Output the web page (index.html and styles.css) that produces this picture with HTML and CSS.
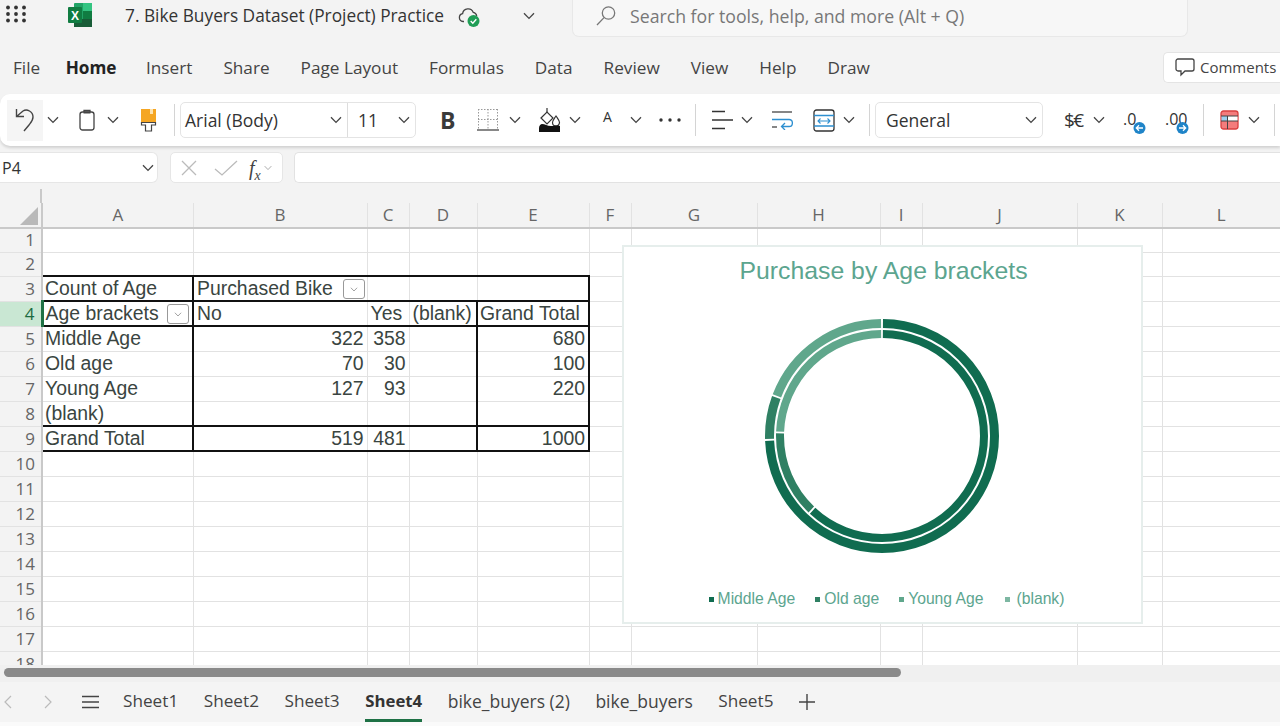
FILE: index.html
```html
<!DOCTYPE html>
<html>
<head>
<meta charset="utf-8">
<title>7. Bike Buyers Dataset (Project) Practice</title>
<link rel="stylesheet" href="styles.css">
</head>
<body>

<svg class="defs" width="0" height="0">
  <symbol id="chev" viewBox="0 0 12 8"><path d="M1 1.2 6 6.4 11 1.2" fill="none" stroke="#444" stroke-width="1.3"/></symbol>
</svg>

<div class="titlebar">
  <svg class="waffle" width="22" height="18" viewBox="0 0 22 18" fill="#333">
    <circle cx="3" cy="2.5" r="1.9"/><circle cx="11" cy="2.5" r="1.9"/><circle cx="19" cy="2.5" r="1.9"/>
    <circle cx="3" cy="9" r="1.9"/><circle cx="11" cy="9" r="1.9"/><circle cx="19" cy="9" r="1.9"/>
    <circle cx="3" cy="15.5" r="1.9"/><circle cx="11" cy="15.5" r="1.9"/><circle cx="19" cy="15.5" r="1.9"/>
  </svg>
  <svg class="xl" width="26" height="26" viewBox="0 0 26 26">
    <rect x="7" y="1" width="18" height="24" rx="1" fill="#21a366"/>
    <rect x="16" y="1" width="9" height="8" fill="#33c481"/>
    <rect x="16" y="9" width="9" height="8" fill="#107c41"/>
    <rect x="7" y="17" width="18" height="8" fill="#185c37"/>
    <rect x="1" y="5" width="14" height="16" rx="1" fill="#107c41"/>
    <text x="8" y="17.5" text-anchor="middle" class="xl-x">X</text>
  </svg>
  <span class="doc-name">7. Bike Buyers Dataset (Project) Practice</span>
  <svg class="cloud" width="23" height="22" viewBox="0 0 23 22">
    <path d="M6 15.5H5a4 4 0 0 1-.4-7.9A5.6 5.6 0 0 1 15.3 6.4a4.4 4.4 0 0 1 3.4 3.6" fill="none" stroke="#444" stroke-width="1.3"/>
    <circle cx="15.5" cy="15" r="6" fill="#1f9d55"/>
    <path d="M12.7 15.1 14.8 17.2 18.3 13.2" fill="none" stroke="#fff" stroke-width="1.4"/>
  </svg>
  <svg class="title-chev" width="12" height="8"><use href="#chev"/></svg>
  <div class="searchbox">
    <svg width="22" height="22" viewBox="0 0 22 22" fill="none" stroke="#777" stroke-width="1.3">
      <circle cx="13.5" cy="8" r="6.2"/><path d="M9 12.6 2 20"/>
    </svg>
    <span>Search for tools, help, and more (Alt + Q)</span>
  </div>
</div>

<div class="menubar">
  <span class="menu-file">File</span>
  <span class="menu-on">Home</span>
  <span>Insert</span>
  <span>Share</span>
  <span>Page Layout</span>
  <span>Formulas</span>
  <span>Data</span>
  <span>Review</span>
  <span>View</span>
  <span>Help</span>
  <span>Draw</span>
  <div class="comments">
    <svg width="22" height="20" viewBox="0 0 22 20" fill="none" stroke="#444" stroke-width="1.3">
      <path d="M4 2h14a2 2 0 0 1 2 2v8a2 2 0 0 1-2 2h-7l-4 4v-4H4a2 2 0 0 1-2-2V4a2 2 0 0 1 2-2z"/>
    </svg>
    Comments
  </div>
</div>

<div class="ribbon">
  <div class="undo">
    <svg width="22" height="28" viewBox="0 0 22 28" fill="none" stroke="#444" stroke-width="1.4">
      <path d="M2.5 3v7.5H10M2.5 10.5 9 5c4-2.500 10 .5 10 6 0 3.500-2 5.500-4 8l-5 6"/>
    </svg>
  </div>
  <svg class="ml4" width="12" height="8"><use href="#chev"/></svg>
  <svg class="ml20" width="16" height="22" viewBox="0 0 16 22" fill="none" stroke="#444" stroke-width="1.3">
    <rect x="1" y="3" width="14" height="18" rx="2.500"/><path d="M5 3V1.500h6V3" /><path d="M4.500 3.500h7" stroke-width="2"/>
  </svg>
  <svg class="ml12" width="12" height="8"><use href="#chev"/></svg>
  <svg class="ml21" width="17" height="24" viewBox="0 0 17 24">
    <rect x="1" y="1" width="15" height="13" fill="#f5a623"/>
    <rect x="10" y="1" width="3" height="5" fill="#fde3b0"/>
    <path d="M1.500 14.500h14v2.500h-4v6h-6v-6h-4z" fill="#fff" stroke="#444" stroke-width="1.200"/>
  </svg>
  <i class="sep ml17"></i>
  <div class="fontbox ml5">
    <div class="fb-name">Arial (Body)<svg width="12" height="8"><use href="#chev"/></svg></div>
    <div class="fb-size">11<svg width="12" height="8"><use href="#chev"/></svg></div>
  </div>
  <b class="bold-b ml24">B</b>
  <svg class="ml22" width="22" height="24" viewBox="0 0 22 24" fill="none">
    <path d="M1 1.500h20M1 11.500h20M1.500 1v20M11 1v20M20.500 1v20" stroke="#999" stroke-width="1" stroke-dasharray="1.500 1.500"/>
    <path d="M0 22h22" stroke="#888" stroke-width="2"/>
  </svg>
  <svg class="ml10" width="12" height="8"><use href="#chev"/></svg>
  <svg class="ml17" width="23" height="24" viewBox="0 0 23 24">
    <path d="M3 10 9 4l6 6-6 6z" fill="#fff" stroke="#333" stroke-width="1.200"/>
    <path d="M9 4V0" stroke="#333" stroke-width="1.200"/>
    <path d="M18 8c2 3 3.500 4.500 3.500 6.500a3.500 3.500 0 0 1-7 0C14.500 12.500 16 11 18 8z" fill="#fff" stroke="#333" stroke-width="1.200"/>
    <path d="M1 24v-4c0-2.500 2-4 3-4 3 0 5 2 9 2s5-1 9 0v6z" fill="#111"/>
  </svg>
  <svg class="ml8" width="12" height="8"><use href="#chev"/></svg>
  <span class="font-a ml22">A</span>
  <svg class="ml17" width="12" height="8"><use href="#chev"/></svg>
  <svg class="ml16" width="24" height="6" viewBox="0 0 24 6" fill="#333">
    <circle cx="3" cy="3" r="1.700"/><circle cx="12" cy="3" r="1.700"/><circle cx="21" cy="3" r="1.700"/>
  </svg>
  <i class="sep ml13"></i>
  <svg class="ml15" width="22" height="20" viewBox="0 0 22 20" stroke="#333" stroke-width="1.300">
    <path d="M1 1.500h13M1 10h21M1 18.500h13"/>
  </svg>
  <svg class="ml8" width="12" height="8"><use href="#chev"/></svg>
  <svg class="ml18" width="22" height="20" viewBox="0 0 22 20" fill="none" stroke="#2d8fd0" stroke-width="1.300">
    <path d="M1 2h20" stroke="#444"/><path d="M1 9.500h17c4.500 0 4.500 7 0 7h-7M14 13l-3.500 3.500L14 20"/><path d="M1 17h5" stroke="#444"/>
  </svg>
  <svg class="ml20" width="22" height="23" viewBox="0 0 22 23" fill="none">
    <rect x="1" y="1" width="20" height="21" rx="2.500" stroke="#333" stroke-width="1.300"/>
    <path d="M1 6.500h20M1 17h20" stroke="#2d8fd0" stroke-width="1.300"/>
    <path d="M5 12h12M7.500 9.500 5 12l2.500 2.500M14.500 9.500 17 12l-2.500 2.500" stroke="#2d8fd0" stroke-width="1.100"/>
  </svg>
  <svg class="ml8" width="12" height="8"><use href="#chev"/></svg>
  <i class="sep ml14"></i>
  <div class="numbox ml5">General<svg width="12" height="8"><use href="#chev"/></svg></div>
  <span class="currency ml21">$€</span>
  <svg class="ml9" width="12" height="8"><use href="#chev"/></svg>
  <svg class="ml18" width="23" height="32" viewBox="0 -8 23 32">
    <text x="0" y="13" class="dec">.0</text>
    <circle cx="16.500" cy="16" r="6" fill="#1f84c8"/>
    <path d="M20 16h-6.500M16 13.300 13.300 16l2.700 2.700" fill="none" stroke="#fff" stroke-width="1.300"/>
  </svg>
  <svg class="ml19" width="25" height="32" viewBox="0 -8 25 32">
    <text x="0" y="13" class="dec">.00</text>
    <circle cx="17.500" cy="16" r="6" fill="#1f84c8"/>
    <path d="M14 16h6.500M18 13.300l2.700 2.700-2.700 2.700" fill="none" stroke="#fff" stroke-width="1.300"/>
  </svg>
  <i class="sep ml13"></i>
  <svg class="ml16" width="19" height="20" viewBox="0 0 19 20">
    <rect x="1" y="1" width="17" height="18" rx="2.500" fill="#f47c7c" stroke="#d94040" stroke-width="1.300"/>
    <rect x="1.500" y="6" width="6" height="5" fill="#9fd0ee"/>
    <rect x="7.500" y="6" width="10" height="5" fill="#fff"/>
    <path d="M1 6h17M1 11h17M7.500 6v13" stroke="#444" stroke-width="1"/>
  </svg>
  <svg class="ml9" width="12" height="8"><use href="#chev"/></svg>
  <i class="sep ml14"></i>
</div>

<div class="formulabar">
  <div class="namebox">P4<svg width="12" height="8"><use href="#chev"/></svg></div>
  <div class="fx-group">
    <svg width="18" height="18" viewBox="0 0 18 18" stroke="#bbb" stroke-width="1.300"><path d="M2 2l14 14M16 2 2 16"/></svg>
    <svg class="fx-check" width="24" height="18" viewBox="0 0 24 18" fill="none" stroke="#bbb" stroke-width="1.300"><path d="M1 10l7 6L23 2"/></svg>
    <span class="fx-label">f<sub>x</sub></span>
    <svg class="fx-chev" width="8" height="6"><use href="#chev"/></svg>
  </div>
  <div class="formula-input"></div>
</div>

<div class="sheet">
  <div class="sheet-top"><i></i></div>
  <table class="cells">
    <colgroup>
      <col class="c-rh"><col class="c-a"><col class="c-b"><col class="c-c"><col class="c-d"><col class="c-e"><col class="c-f">
      <col class="c-g"><col class="c-h"><col class="c-i"><col class="c-j"><col class="c-k"><col class="c-l">
    </colgroup>
    <thead>
      <tr>
        <th class="corner"><svg width="18" height="18" viewBox="0 0 18 18"><path d="M18 0v18H0z" fill="#b9b9b9"/></svg></th>
        <th>A</th><th>B</th><th>C</th><th>D</th><th>E</th><th>F</th><th>G</th><th>H</th><th>I</th><th>J</th><th>K</th><th>L</th>
      </tr>
    </thead>
    <tbody>
      <tr class="r-short"><th>1</th><td></td><td></td><td></td><td></td><td></td><td></td><td></td><td></td><td></td><td></td><td></td><td></td></tr>
      <tr class="r-short"><th>2</th><td></td><td></td><td></td><td></td><td></td><td></td><td></td><td></td><td></td><td></td><td></td><td></td></tr>
      <tr>
        <th>3</th>
        <td class="box-l box-r box-t box-b">Count of Age</td>
        <td class="box-t box-b nospill">Purchased Bike<span class="filter filter-inline"><svg width="8" height="5"><use href="#chev"/></svg></span></td>
        <td class="box-t box-b"></td><td class="box-t box-b"></td><td class="box-t box-b box-r"></td>
        <td></td><td></td><td></td><td></td><td></td><td></td><td></td>
      </tr>
      <tr>
        <th class="row-sel">4</th>
        <td class="box-l box-r box-b">Age brackets<span class="filter filter-end"><svg width="8" height="5"><use href="#chev"/></svg></span></td>
        <td class="box-b">No</td><td class="box-b">Yes</td><td class="box-b">(blank)</td>
        <td class="box-l box-r box-b">Grand Total</td>
        <td></td><td></td><td></td><td></td><td></td><td></td><td></td>
      </tr>
      <tr>
        <th>5</th><td class="box-l box-r">Middle Age</td>
        <td class="num">322</td><td class="num">358</td><td></td><td class="box-l box-r num">680</td>
        <td></td><td></td><td></td><td></td><td></td><td></td><td></td>
      </tr>
      <tr>
        <th>6</th><td class="box-l box-r">Old age</td>
        <td class="num">70</td><td class="num">30</td><td></td><td class="box-l box-r num">100</td>
        <td></td><td></td><td></td><td></td><td></td><td></td><td></td>
      </tr>
      <tr>
        <th>7</th><td class="box-l box-r">Young Age</td>
        <td class="num">127</td><td class="num">93</td><td></td><td class="box-l box-r num">220</td>
        <td></td><td></td><td></td><td></td><td></td><td></td><td></td>
      </tr>
      <tr>
        <th>8</th><td class="box-l box-r box-b">(blank)</td>
        <td class="box-b"></td><td class="box-b"></td><td class="box-b"></td><td class="box-l box-r box-b"></td>
        <td></td><td></td><td></td><td></td><td></td><td></td><td></td>
      </tr>
      <tr>
        <th>9</th><td class="box-l box-r box-b">Grand Total</td>
        <td class="num box-b">519</td><td class="num box-b">481</td><td class="box-b"></td><td class="box-l box-r box-b num">1000</td>
        <td></td><td></td><td></td><td></td><td></td><td></td><td></td>
      </tr>
      <tr><th>10</th><td></td><td></td><td></td><td></td><td></td><td></td><td></td><td></td><td></td><td></td><td></td><td></td></tr>
      <tr><th>11</th><td></td><td></td><td></td><td></td><td></td><td></td><td></td><td></td><td></td><td></td><td></td><td></td></tr>
      <tr><th>12</th><td></td><td></td><td></td><td></td><td></td><td></td><td></td><td></td><td></td><td></td><td></td><td></td></tr>
      <tr><th>13</th><td></td><td></td><td></td><td></td><td></td><td></td><td></td><td></td><td></td><td></td><td></td><td></td></tr>
      <tr><th>14</th><td></td><td></td><td></td><td></td><td></td><td></td><td></td><td></td><td></td><td></td><td></td><td></td></tr>
      <tr><th>15</th><td></td><td></td><td></td><td></td><td></td><td></td><td></td><td></td><td></td><td></td><td></td><td></td></tr>
      <tr><th>16</th><td></td><td></td><td></td><td></td><td></td><td></td><td></td><td></td><td></td><td></td><td></td><td></td></tr>
      <tr><th>17</th><td></td><td></td><td></td><td></td><td></td><td></td><td></td><td></td><td></td><td></td><td></td><td></td></tr>
      <tr><th>18</th><td></td><td></td><td></td><td></td><td></td><td></td><td></td><td></td><td></td><td></td><td></td><td></td></tr>
    </tbody>
  </table>

  <div class="chart">
    <div class="chart-title">Purchase by Age brackets</div>
    <svg class="donut" width="240" height="240" viewBox="0 0 240 240">
      <g fill="none" transform="rotate(-90 120 120)">
        <g stroke-width="9">
          <circle cx="120" cy="120" r="112.500" pathLength="360" stroke="#106c50" stroke-dasharray="267 93" stroke-dashoffset="-.5"/>
          <circle cx="120" cy="120" r="112.500" pathLength="360" stroke="#2f8063" stroke-dasharray="21.500 338.500" stroke-dashoffset="-268.500"/>
          <circle cx="120" cy="120" r="112.500" pathLength="360" stroke="#60a78c" stroke-dasharray="68.600 291.400" stroke-dashoffset="-290.900"/>
        </g>
        <g stroke-width="8">
          <circle cx="120" cy="120" r="102" pathLength="360" stroke="#106c50" stroke-dasharray="222.400 137.600" stroke-dashoffset="-.5"/>
          <circle cx="120" cy="120" r="102" pathLength="360" stroke="#2f8063" stroke-dasharray="47.600 312.400" stroke-dashoffset="-223.900"/>
          <circle cx="120" cy="120" r="102" pathLength="360" stroke="#60a78c" stroke-dasharray="87 273" stroke-dashoffset="-272.500"/>
        </g>
      </g>
    </svg>
    <div class="legend">
      <span class="lg lg-1">Middle Age</span>
      <span class="lg lg-2">Old age</span>
      <span class="lg lg-3">Young Age</span>
      <span class="lg lg-4">(blank)</span>
    </div>
  </div>
</div>

<div class="hscroll"><div class="thumb"></div></div>

<div class="tabs">
  <svg class="nav-prev" width="8" height="14" viewBox="0 0 8 14" fill="none" stroke="#bbb" stroke-width="1.200"><path d="M7 1 1 7l6 6"/></svg>
  <svg class="nav-next" width="8" height="14" viewBox="0 0 8 14" fill="none" stroke="#bbb" stroke-width="1.200"><path d="M1 1l6 6-6 6"/></svg>
  <svg class="nav-all" width="17" height="14" viewBox="0 0 17 14" stroke="#444" stroke-width="1.600"><path d="M0 1.500h17M0 7h17M0 12.500h17"/></svg>
  <span class="tab">Sheet1</span>
  <span class="tab">Sheet2</span>
  <span class="tab">Sheet3</span>
  <span class="tab tab-on">Sheet4</span>
  <span class="tab tab-long">bike_buyers (2)</span>
  <span class="tab tab-long">bike_buyers</span>
  <span class="tab">Sheet5</span>
  <svg class="tab-add" width="16" height="16" viewBox="0 0 16 16" stroke="#444" stroke-width="1.400"><path d="M8 0v16M0 8h16"/></svg>
</div>
<div class="foot"></div>

</body>
</html>
```

FILE: styles.css
```css
* { box-sizing: border-box; }
html, body { margin: 0; overflow: hidden; }
body { width: 1280px; height: 726px; display: flex; flex-direction: column; background: #f3f3f3; color: #333; font-family: "Open Sans", "Noto Sans", sans-serif; font-size: 17.500px; }
svg { display: block; flex: none; }
.defs { position: absolute; }

/* title bar */
.titlebar { height: 42px; flex: none; display: flex; align-items: flex-start; padding-left: 5px; }
.waffle { margin-top: 5px; }
.xl { margin: 2px 0 0 40px; }
.xl-x { font: 700 12px "Liberation Sans", sans-serif; fill: #fff; }
.doc-name { margin: 4px 0 0 32px; width: 333px; white-space: nowrap; line-height: 24px; font-size: 17.300px; }
.cloud { margin-top: 6px; }
.title-chev { margin: 12px 0 0 42px; }
.searchbox { margin-left: 37px; width: 616px; height: 37px; display: flex; align-items: center; gap: 13px; padding: 0 0 5px 22px; background: #f7f7f7; border: 1px solid #e8e8e8; border-top: 0; border-radius: 0 0 7px 7px; color: #777; font-size: 17.700px; }

/* menu */
.menubar { height: 52px; flex: none; display: flex; align-items: center; gap: 31px; padding: 0 0 2px 13px; color: #444; font-size: 17.200px; }
.menu-file { margin-right: -5.500px; }
.menu-on { font-weight: 700; color: #222; margin-right: -1.500px; }
.comments { margin-left: auto; width: 117px; height: 31px; padding-left: 10px; display: flex; align-items: center; gap: 4px; background: #fff; border: 1px solid #e4e4e4; border-right: 0; border-radius: 5px 0 0 5px; font-size: 15px; white-space: nowrap; }

/* ribbon */
.ribbon { height: 52px; flex: none; display: flex; align-items: center; padding-left: 7px; background: #fff; border-radius: 10px 0 0 10px; box-shadow: 0 2px 3px rgba(0,0,0,.14); }
.undo { width: 36px; height: 41px; display: flex; align-items: center; justify-content: center; background: #f5f5f5; }
.sep { width: 1px; height: 32px; background: #d4d4d4; }
.ml4 { margin-left: 4px; } .ml5 { margin-left: 5px; } .ml8 { margin-left: 8px; } .ml9 { margin-left: 9px; }
.ml10 { margin-left: 10px; } .ml12 { margin-left: 12px; } .ml13 { margin-left: 13px; } .ml14 { margin-left: 14px; }
.ml15 { margin-left: 15px; } .ml16 { margin-left: 16px; } .ml17 { margin-left: 17px; } .ml18 { margin-left: 18px; }
.ml19 { margin-left: 19px; } .ml20 { margin-left: 20px; } .ml21 { margin-left: 21px; } .ml22 { margin-left: 22px; } .ml24 { margin-left: 24px; }
.fontbox { width: 236px; height: 36px; display: flex; border: 1px solid #e4e4e4; border-radius: 5px; }
.fb-name { width: 167px; display: flex; align-items: center; justify-content: space-between; padding: 0 5px 0 4px; border-right: 1px solid #ddd; }
.fb-size { flex: 1; display: flex; align-items: center; justify-content: space-between; padding: 0 5px 0 10px; }
.bold-b { width: 15px; font: 700 23px "Open Sans", sans-serif; color: #3a3a3a; }
.font-a { width: 10px; font-size: 14px; margin-top: -7px; }
.numbox { width: 168px; height: 36px; display: flex; align-items: center; justify-content: space-between; padding: 0 5px 0 10px; border: 1px solid #e4e4e4; border-radius: 5px; }
.currency { width: 20px; font-size: 19px; letter-spacing: -1.500px; white-space: nowrap; }
.dec { font: 16px "Open Sans", sans-serif; fill: #333; }

/* formula bar */
.formulabar { height: 43px; flex: none; display: flex; gap: 12px; padding-top: 6px; }
.namebox { width: 158px; height: 31px; display: flex; align-items: center; justify-content: space-between; padding: 0 1px 0 2px; background: #fff; border: 1px solid #e6e6e6; border-left: 0; border-radius: 0 6px 6px 0; font-size: 16px; }
.namebox svg { margin-right: 2px; }
.fx-group { width: 113px; height: 31px; display: flex; align-items: center; padding-left: 9px; background: #fff; border: 1px solid #e6e6e6; border-radius: 5px; }
.fx-check { margin-left: 16px; }
.fx-label { font: italic 20px "Liberation Serif", serif; color: #444; margin-left: 11px; line-height: 24px; }
.fx-label sub { font-size: 14px; line-height: 0; }
.fx-chev { margin-left: 3px; opacity: .5; }
.formula-input { flex: 1; height: 31px; margin-left: -1px; background: #fff; border: 1px solid #e2e2e2; border-right: 0; border-radius: 5px 0 0 5px; }

/* sheet */
.sheet { position: relative; flex: 1; min-height: 0; overflow: hidden; background: #fff; }
.sheet-top { height: 14px; background: #f3f3f3; }
.sheet-top i { display: block; width: 42px; height: 14px; border-right: 2px solid #c9c9c9; }
.cells { table-layout: fixed; width: 1280px; border-collapse: collapse; font: 19.400px "Liberation Sans", sans-serif; color: #3a4541; }
.c-rh { width: 42px; } .c-a { width: 151px; } .c-b { width: 174px; } .c-c { width: 42px; } .c-d { width: 68px; } .c-e { width: 112px; } .c-f { width: 42px; }
.c-g { width: 126px; } .c-h { width: 123px; } .c-i { width: 42px; } .c-j { width: 155px; } .c-k { width: 85px; } .c-l { width: 118px; }
.cells th { font: 17px/18px "Open Sans", sans-serif; color: #666; background: #f3f3f3; padding: 0; }
.cells thead th { height: 22px; text-align: center; border-left: 1px solid #e2e2e2; border-bottom: 2px solid #c9c9c9; }
.cells thead th.corner { border-left: 0; border-right: 2px solid #c9c9c9; }
.corner svg { margin: 1px 0 0 20px; }
.cells tbody th { text-align: right; padding-right: 6px; border-right: 2px solid #c9c9c9; border-bottom: 1px solid #e2e2e2; }
.cells tbody th.row-sel { background: #c9e7d3; color: #1c6b41; border-right: 3px solid #1e7145; }
.cells tr { height: 25px; }
.cells tr.r-short { height: 24px; }
.cells td { padding: 0 3px; border: 1px solid #e2e2e2; white-space: nowrap; overflow: visible; line-height: 21px; }
.cells td.num { text-align: right; }
.cells td.box-l { border-left: 2px solid #111; padding-left: 2px; }
.cells td.box-r { border-right: 2px solid #111; }
.cells td.box-t { border-top: 2px solid #111; }
.cells td.box-b { border-bottom: 2px solid #111; }
.nospill { border-right-color: transparent; }
.filter { width: 22px; height: 20px; display: inline-flex; align-items: center; justify-content: center; background: #fff; border: 1px solid #999; border-radius: 3px; vertical-align: top; }
.filter svg { opacity: .6; }
.filter-inline { margin: 1px 0 0 10px; }
.filter-end { float: right; margin: 1px 0 0 0; }

/* chart */
.chart { position: absolute; left: 622px; top: 56px; width: 521px; height: 379px; display: flex; flex-direction: column; align-items: center; background: #fff; border: 2px solid #e6eeec; color: #5ca58f; }
.chart-title { margin: 8px 0 0 2px; height: 32px; font: 24.800px/32px "Liberation Sans", sans-serif; }
.donut { margin-top: 29px; transform: translateX(-1px); }
.legend { margin: 33px 0 0 8px; display: flex; gap: 20px; font: 15.700px/20px "Liberation Sans", sans-serif; }
.lg { display: flex; align-items: center; gap: 4px; }
.lg::before { content: ""; width: 5px; height: 5px; }
.lg-1::before { background: #106c50; }
.lg-2::before { background: #2f8063; }
.lg-3::before { background: #60a78c; }
.lg-4::before { background: #7db7a2; }
.lg-4 { margin-left: 2px; gap: 6px; }

/* bottom */
.hscroll { height: 17px; flex: none; padding: 3px 0 0 4px; background: #f0f0f0; }
.thumb { width: 897px; height: 9px; border-radius: 5px; background: #8a8a8a; }
.tabs { height: 40px; flex: none; display: flex; align-items: center; padding-left: 4px; background: #f4f4f4; font-size: 17.200px; color: #444; }
.nav-next { margin-left: 32px; }
.nav-all { margin: 0 0 0 30px; }
.tab { margin-left: 25.500px; height: 40px; line-height: 38px; white-space: nowrap; }
.nav-all + .tab { margin-left: 24px; }
.tab-on { font-weight: 700; font-size: 16.800px; color: #333; border-bottom: 3px solid #1e7145; }
.tab-long { font-size: 17.500px; }
.tab-add { margin-left: 26px; }
.foot { height: 4px; flex: none; background: #fafafa; }
```
